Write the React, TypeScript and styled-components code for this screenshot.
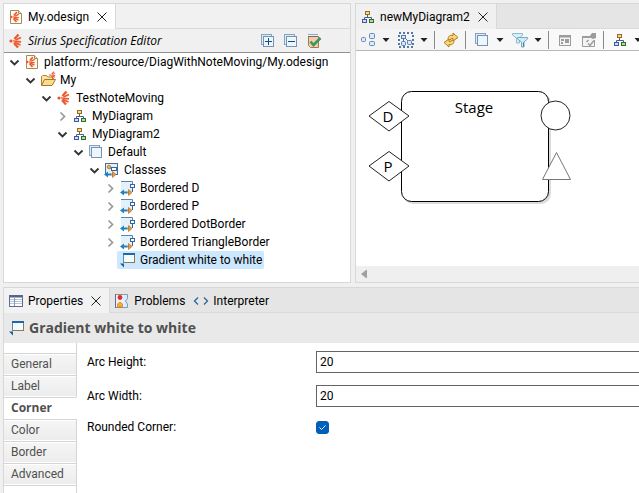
import React, { useState } from "react";
import styled, { createGlobalStyle, css } from "styled-components";

const humanist = `"Open Sans", "Noto Sans", sans-serif`;

const GlobalStyle = createGlobalStyle`
  *, *::before, *::after { box-sizing: border-box; }
  html, body, #root { height: 100%; }
  body {
    margin: 0;
    background: #f0f0f0;
    color: #000;
    font: 12px/18px Roboto, "Open Sans", sans-serif;
    overflow: hidden;
  }
  button, input { font: inherit; color: inherit; }
`;

/* ---------- icons ---------- */

const Svg = styled.svg`
  display: block;
  flex: none;
  overflow: visible;
`;

type IconProps = { children: React.ReactNode; width?: number; height?: number };
const Icon = ({ children, width = 16, height = 16 }: IconProps) => (
  <Svg width={width} height={height} viewBox={`0 0 ${width} ${height}`} fill="none" aria-hidden="true">
    {children}
  </Svg>
);

const FanShape = () => (
  <>
    <circle cx="3" cy="8" r="1.6" fill="#e8562f" />
    <g stroke="#ee5a30">
      <path d="M6.500 6 10.500 1.500" strokeWidth="2.400" />
      <path d="M7.500 7 13 4.500" strokeWidth="1.800" />
      <path d="M7 8.300 13 8.800" strokeWidth="1.800" />
      <path d="M6.500 9.300 12.500 12" strokeWidth="1.900" />
      <path d="M6 10 10 14.500" strokeWidth="2.400" />
    </g>
    <circle cx="6" cy="8" r="1.200" fill="#f58a68" />
  </>
);

const FanIcon = () => <Icon><FanShape /></Icon>;

const DesignFileIcon = () => (
  <Icon>
    <path d="M2.500 1.500h8l3 3v10h-11z" fill="#fdfcf3" stroke="#a58b55" />
    <path d="M10.500 1.500v3h3" fill="#f1dfab" stroke="#a58b55" />
    <g transform="translate(1 2) scale(.75)"><FanShape /></g>
  </Icon>
);

const FolderIcon = () => (
  <Icon>
    <path d="M1.500 13.500v-9l1-1h4l1 1.500h5v3" fill="#fbe6a8" stroke="#b5812f" />
    <path d="M1.500 13.500 4.500 7.500h11l-3.500 6z" fill="#fbdc8c" stroke="#a8752a" />
    <g transform="translate(8.500 -1) scale(.52)"><FanShape /></g>
  </Icon>
);

const DiagramIcon = () => (
  <Icon>
    <path d="M7.500 6v3M4.500 11V8.500h7V11" stroke="#4a5f82" />
    <rect x="5.500" y="2.500" width="4" height="3" fill="#f6d98c" stroke="#9a6d1e" />
    <rect x="2.500" y="10.500" width="4" height="3" fill="#cfe0fa" stroke="#3a5aa0" />
    <rect x="9.500" y="10.500" width="4" height="3" fill="#b4dc98" stroke="#2f6b2c" />
  </Icon>
);

const LayerIcon = ({ sign }: { sign?: "plus" | "minus" }) => (
  <Icon>
    <rect x="1.500" y="1.500" width="10" height="10" fill="#d8eef6" stroke="#8b9fbe" />
    <rect x="3.500" y="3.500" width="10" height="10" fill="#eaf8fd" stroke="#7a90b4" />
    {sign && <path d="M5 8.500h7" stroke="#174b82" />}
    {sign === "plus" && <path d="M8.500 5v7" stroke="#174b82" />}
  </Icon>
);

const ValidateIcon = () => (
  <Icon>
    <path d="M2.500 3.500h10v11h-8l-2-2z" fill="#fbc9a4" stroke="#a4794c" />
    <path d="M2.500 1.500h10M2.500 3.500h10" stroke="#3b5f92" strokeDasharray="1 1" />
    <path d="m4.500 8.500 3 3.500 7-7" stroke="#349a66" strokeWidth="2.600" />
  </Icon>
);

const ArrowsShape = () => (
  <>
    <path d="M3 12.500h4" stroke="#2480c0" strokeWidth="2" />
    <path d="m4 9.500-4 3 4 3z" fill="#1b84cc" />
    <path d="M7 12.500h3" stroke="#cf8632" strokeWidth="2" />
    <path d="m8.500 9.500 3.500 3-3.500 3z" fill="#e79c45" stroke="#9c6227" strokeWidth=".6" />
  </>
);

const ContainerIcon = () => (
  <Icon>
    <rect x="1.500" y="1.500" width="12" height="11" fill="#e2f1fa" stroke="#4a6d9a" />
    <circle cx="5" cy="5" r="1.800" fill="#eba94c" stroke="#a06a20" strokeWidth=".7" />
    <path d="M6.500 6.500 9 9" stroke="#a06a20" />
    <rect x="7.500" y="5.500" width="5" height="3" fill="#fff" stroke="#3b6296" />
    <ArrowsShape />
  </Icon>
);

const BorderedIcon = () => (
  <Icon>
    <path d="M1 1h11v11H1z" fill="#e2f1fa" />
    <path d="M1 1.500h11.500V5" stroke="#5d84ae" />
    <rect x="10.500" y="4.500" width="4" height="3" fill="#fff" stroke="#35649c" />
    <path d="M12.500 8v4" stroke="#35649c" />
    <ArrowsShape />
  </Icon>
);

const StyleIcon = () => (
  <Icon>
    <rect x="3.500" y="1.500" width="11" height="9" fill="#f2fbff" stroke="#8a7a4e" />
    <path d="M3 2h12" stroke="#2366a8" strokeWidth="2" />
    <path d="M3.500 3v7.500" stroke="#5c88b4" />
    <path d="M0 11.500h4v4z" fill="#1c5f96" />
  </Icon>
);

const ShapesIcon = () => (
  <Icon>
    <g fill="#dceafb" stroke="#6685b8">
      <rect x="1.500" y="5.500" width="4" height="4" rx="1" />
      <rect x="9.500" y="1.500" width="5" height="5" rx="1" />
      <rect x="9.500" y="9.500" width="5" height="4" rx="1" />
    </g>
  </Icon>
);

const SelectIcon = () => (
  <Icon>
    <rect x="1" y="1" width="14" height="14" stroke="#244f80" strokeWidth="1.500" strokeDasharray="2 2" />
    <path d="M5.500 6v5M6 5l5 5" stroke="#4f709f" />
    <g fill="#d6e7fb" stroke="#547cae">
      <rect x="3.500" y="3.500" width="4" height="3" />
      <rect x="3.500" y="9.500" width="4" height="4" rx="1" />
      <rect x="9.500" y="8.500" width="4" height="4" rx="1" />
    </g>
  </Icon>
);

const RefreshIcon = () => (
  <Icon>
    <g fill="#f7d778" stroke="#b37c1b" strokeLinejoin="round">
      <path d="M5 7.500C5 4.500 7 2.500 10 3.500V1l5 4.500-5 3.500V6.500C8.500 6 7.500 6.500 7.500 8z" />
      <path d="M11 8.500c0 3-2 5-5 4V15l-5-4.500L6 7v2.500c1.500.5 2.500 0 2.500-1.500z" />
    </g>
  </Icon>
);

const FilterIcon = () => (
  <Icon>
    <path d="M.5 1.500h10v1.500L7.500 6v5h-3V6l-4-3z" fill="#d2f1fb" stroke="#90b8cc" />
    <path d="M5.500 5.500h10v1.500L12 10v5H9.500v-5l-4-3z" fill="#c9eefb" stroke="#7ba6bd" />
    <path d="M11.500 10.500v4" stroke="#4f7894" />
  </Icon>
);

const WindowToolIcon = () => (
  <Icon>
    <rect x="2.500" y="3.500" width="11" height="10" fill="#f4f4f4" stroke="#9c9c9c" />
    <path d="M2 4.500h12M4 8h3M4 11h2" stroke="#9c9c9c" strokeWidth="2" />
    <path d="M8 7h4v4H8z" fill="#9c9c9c" />
  </Icon>
);

const PinToolIcon = () => (
  <Icon>
    <path d="M10 4.500H1.500v10h12V8" fill="#f4f4f4" stroke="#9c9c9c" />
    <path d="M1 5h8" stroke="#9c9c9c" strokeWidth="2" />
    <path d="M11 1h4v5l-3 1-4-2z" fill="#9c9c9c" />
    <path d="m7.500 8-2 2M7 11.500l2 2 4-5" stroke="#9c9c9c" strokeWidth="1.500" />
  </Icon>
);

const PropertiesIcon = () => (
  <Icon>
    <rect x="1.500" y="2.500" width="13" height="11" fill="#fff" stroke="#5f6d92" />
    <path d="M2 3.500h12" stroke="#52628c" strokeWidth="2" />
    <path d="M2 6.500h12M2 8.500h12M2 10.500h12" stroke="#b8c6dc" />
    <path d="M6.500 5v8" stroke="#8495b5" />
  </Icon>
);

const ProblemsIcon = () => (
  <Icon>
    <path d="M1.500 1.500h9v13h-9z" fill="#f4f0ec" stroke="#a08c78" />
    <path d="M9.500 1.500h4v4l-2 2.500 2 3v3.500h-4" fill="#dcecfa" stroke="#7b9cc0" />
    <path d="M1.500 1v14" stroke="#5470a0" />
    <circle cx="6" cy="4.500" r="2.400" fill="#da2d3b" />
    <path d="M3.500 14v-3L5 9.500h2L8.500 11v3z" fill="#f4ae36" stroke="#cf7b1c" strokeWidth=".7" />
  </Icon>
);

const CodeIcon = () => (
  <Icon>
    <path d="M5 4.500 1.500 8 5 11.500M11 4.500 14.500 8 11 11.500" stroke="#2b6795" strokeWidth="1.300" />
  </Icon>
);

const CloseIcon = () => (
  <Icon width={10} height={10}><path d="m.5.5 9 9m0-9-9 9" stroke="#222" /></Icon>
);

const CaretIcon = () => (
  <Icon width={8} height={8}><path d="M.5 2h7L4 6z" fill="#222" /></Icon>
);

const ChevronIcon = ({ open }: { open: boolean }) => (
  <Icon width={8} height={8}>
    {open ? (
      <path d="M.5 2.500 4.500 6.500l4-4" stroke="#333" strokeWidth="1.800" />
    ) : (
      <path d="M2.500.5 6.500 4.500l-4 4" stroke="#999" strokeWidth="1.700" />
    )}
  </Icon>
);

/* ---------- shared parts ---------- */

const Workbench = styled.main`
  display: grid;
  grid-template-columns: minmax(0, 348fr) minmax(0, 284fr);
  grid-template-rows: auto minmax(0, 1fr);
  gap: 4px;
  min-height: 100%;
  padding: 3px 0 0 3px;
`;

const Panel = styled.section<{ $wide?: boolean; $bleed?: boolean }>`
  display: flex;
  flex-direction: column;
  min-width: 0;
  background: #fff;
  border: 1px solid #d8d8d8;
  ${(p) => p.$bleed && css`border-right: 0;`}
  ${(p) => p.$wide && css`grid-column: 1 / -1; border-bottom: 0;`}
`;

const TabStrip = styled.div<{ $shade?: boolean }>`
  display: flex;
  height: 25px;
  flex: none;
  background: ${(p) => (p.$shade ? "#e5e5e5" : "#f1f1f1")};
  box-shadow: inset 0 -1px #dadada;
`;

const Tab = styled.div<{ $tone?: string }>`
  display: flex;
  align-items: center;
  gap: 8px;
  padding: 0 8px 0 4px;
  background: ${(p) => p.$tone ?? "transparent"};
  ${(p) => p.$tone && css`border-right: 1px solid #d8d8d8;`}
`;

const TabButton = styled.button`
  display: flex;
  align-items: center;
  gap: 4px;
  padding: 0;
  border: 0;
  background: none;
  white-space: nowrap;
`;

const IconButton = styled.button`
  display: flex;
  align-items: center;
  gap: 6px;
  padding: 0;
  border: 0;
  background: none;
`;

/* ---------- specification editor ---------- */

const EditorHeader = styled.header`
  display: flex;
  align-items: center;
  gap: 4px;
  height: 24px;
  padding: 0 28px 0 4px;
  background: #f0f0f0;
  border-bottom: 1px solid #929292;
`;

const EditorTitle = styled.h1`
  flex: 1;
  margin: 0;
  font: italic 400 12px/18px ${humanist};
  white-space: nowrap;
`;

const HeaderActions = styled.div`
  display: flex;
  gap: 7px;
`;

const Tree = styled.ul`
  list-style: none;
  margin: 0;
  padding: 0 0 13px;
`;

const TreeRow = styled.li<{ $level: number }>`
  display: flex;
  align-items: center;
  gap: 3px;
  height: 18px;
  padding-left: ${(p) => 6 + p.$level * 16}px;
`;

const Toggle = styled.button`
  width: 8px;
  padding: 0;
  border: 0;
  background: none;
`;

const Node = styled.button<{ $selected: boolean }>`
  display: flex;
  align-items: center;
  gap: 4px;
  height: 18px;
  padding: 0 2px 0 3px;
  border: 0;
  border-radius: 2px;
  background: ${(p) => (p.$selected ? "#cce8ff" : "transparent")};
  white-space: nowrap;
`;

type Item = { level: number; label: string; icon: React.ReactNode; open?: boolean };

const items: Item[] = [
  { level: 0, label: "platform:/resource/DiagWithNoteMoving/My.odesign", icon: <DesignFileIcon />, open: true },
  { level: 1, label: "My", icon: <FolderIcon />, open: true },
  { level: 2, label: "TestNoteMoving", icon: <FanIcon />, open: true },
  { level: 3, label: "MyDiagram", icon: <DiagramIcon />, open: false },
  { level: 3, label: "MyDiagram2", icon: <DiagramIcon />, open: true },
  { level: 4, label: "Default", icon: <LayerIcon />, open: true },
  { level: 5, label: "Classes", icon: <ContainerIcon />, open: true },
  { level: 6, label: "Bordered D", icon: <BorderedIcon />, open: false },
  { level: 6, label: "Bordered P", icon: <BorderedIcon />, open: false },
  { level: 6, label: "Bordered DotBorder", icon: <BorderedIcon />, open: false },
  { level: 6, label: "Bordered TriangleBorder", icon: <BorderedIcon />, open: false },
  { level: 6, label: "Gradient white to white", icon: <StyleIcon /> },
];

function SpecificationEditor() {
  const [selected, setSelected] = useState("Gradient white to white");
  return (
    <Panel>
      <TabStrip>
        <Tab $tone="#ffffff">
          <TabButton><DesignFileIcon />My.odesign</TabButton>
          <IconButton aria-label="Close My.odesign"><CloseIcon /></IconButton>
        </Tab>
      </TabStrip>
      <EditorHeader>
        <FanIcon />
        <EditorTitle>Sirius Specification Editor</EditorTitle>
        <HeaderActions>
          <IconButton aria-label="Expand all"><LayerIcon sign="plus" /></IconButton>
          <IconButton aria-label="Collapse all"><LayerIcon sign="minus" /></IconButton>
          <IconButton aria-label="Validate"><ValidateIcon /></IconButton>
        </HeaderActions>
      </EditorHeader>
      <Tree>
        {items.map((item) => (
          <TreeRow key={item.label} $level={item.level}>
            <Toggle aria-label={`Toggle ${item.label}`} disabled={item.open === undefined}>
              {item.open !== undefined && <ChevronIcon open={item.open} />}
            </Toggle>
            <Node $selected={item.label === selected} onClick={() => setSelected(item.label)}>
              {item.icon}
              {item.label}
            </Node>
          </TreeRow>
        ))}
      </Tree>
    </Panel>
  );
}

/* ---------- diagram editor ---------- */

const Toolbar = styled.div`
  display: flex;
  align-items: center;
  height: 22px;
  padding-left: 4px;
  overflow: hidden;
  background: linear-gradient(90deg, #f3f3f3, #fbfbfb);
  border-bottom: 1px solid #b8b8b8;
`;

const ToolGroup = styled.div`
  display: flex;
  align-items: center;
  gap: 8px;
  height: 18px;
  flex: none;
  padding-right: 6px;
  margin-right: 8px;
  border-right: 1px solid #8a8a8a;
`;

const Canvas = styled.div`
  flex: 1;
  min-height: 0;
  overflow: hidden;
`;

const CanvasLabel = styled.text`
  font-family: ${humanist};
  font-size: 15px;
  fill: #000;
  text-anchor: middle;
`;

const ScrollTrack = styled.div`
  display: flex;
  align-items: center;
  height: 16px;
  padding-left: 5px;
  background: #efefef;
`;

type ToolProps = { label: string; icon: React.ReactNode; menu?: boolean };
const Tool = ({ label, icon, menu }: ToolProps) => (
  <IconButton aria-label={label}>
    {icon}
    {menu && <CaretIcon />}
  </IconButton>
);

function DiagramEditor() {
  return (
    <Panel $bleed>
      <TabStrip $shade>
        <Tab $tone="#f0f0f0">
          <TabButton><DiagramIcon />newMyDiagram2</TabButton>
          <IconButton aria-label="Close newMyDiagram2"><CloseIcon /></IconButton>
        </Tab>
      </TabStrip>
      <Toolbar>
        <ToolGroup>
          <Tool label="Arrange" icon={<ShapesIcon />} menu />
          <Tool label="Select" icon={<SelectIcon />} menu />
        </ToolGroup>
        <ToolGroup>
          <Tool label="Refresh" icon={<RefreshIcon />} />
        </ToolGroup>
        <ToolGroup>
          <Tool label="Layers" icon={<LayerIcon />} menu />
          <Tool label="Filters" icon={<FilterIcon />} menu />
        </ToolGroup>
        <ToolGroup>
          <Tool label="Hide element" icon={<WindowToolIcon />} />
          <Tool label="Pin element" icon={<PinToolIcon />} />
        </ToolGroup>
        <ToolGroup>
          <Tool label="Diagram" icon={<DiagramIcon />} menu />
        </ToolGroup>
      </Toolbar>
      <Canvas>
        <Svg width="283" height="180" viewBox="0 0 283 180" fill="none" role="img" aria-label="Stage diagram">
          <rect x="47" y="42" width="148" height="111" rx="10" fill="#dcdcdc" />
          <rect x="45.500" y="40.500" width="147" height="110" rx="10" fill="#fff" stroke="#000" />
          <CanvasLabel x="118" y="62">Stage</CanvasLabel>
          <g fill="#fff" stroke="#222">
            <path d="m33 50.500 20 14.500-20 15-20-15z" />
            <path d="m33 100.500 20 14.500-20 15-20-15z" />
            <circle cx="199.500" cy="64.500" r="14.500" />
            <path d="m200.500 101.500 14 27h-28z" stroke="#777" />
          </g>
          <CanvasLabel x="32" y="71">D</CanvasLabel>
          <CanvasLabel x="32" y="121">P</CanvasLabel>
        </Svg>
      </Canvas>
      <ScrollTrack>
        <IconButton aria-label="Scroll left">
          <Icon width={6} height={8}><path d="M6 0v8H5L0 4l5-4z" fill="#a0a0a0" /></Icon>
        </IconButton>
      </ScrollTrack>
    </Panel>
  );
}

/* ---------- properties view ---------- */

const PropertiesTitle = styled.header`
  display: flex;
  align-items: center;
  gap: 4px;
  height: 30px;
  padding-left: 5px;
  background: #e9e9e9;
`;

const Heading = styled.h2`
  margin: 0;
  color: #505050;
  font: 700 14px/18px ${humanist};
`;

const PropertiesBody = styled.div`
  display: grid;
  grid-template-columns: 73px minmax(0, 1fr);
  flex: 1;
`;

const SideTabs = styled.nav`
  display: flex;
  flex-direction: column;

  &::before, &::after {
    content: "";
    border-right: 1px solid #d5d5d5;
  }
  &::before { height: 10px; }
  &::after { flex: 1; border-top: 1px solid #d5d5d5; }
`;

const SideTab = styled.button<{ $active: boolean }>`
  height: 22px;
  padding: 0 7px 2px;
  border: solid #d5d5d5;
  border-width: 1px 1px 0 0;
  background: linear-gradient(#f6f6f6, #ececec);
  box-shadow: inset 0 1px #fff, inset 0 -1px #fff;
  color: #505050;
  text-align: left;
  ${(p) =>
    p.$active &&
    css`
      background: #fff;
      border-right-color: #fff;
      font-family: ${humanist};
      font-weight: 700;
    `}
`;

const Form = styled.form`
  display: grid;
  grid-template-columns: 229px minmax(0, 1fr);
  grid-template-rows: 22px 22px 16px;
  row-gap: 12px;
  align-content: start;
  align-items: center;
  padding: 8px 0 0 10px;
`;

const TextField = styled.input`
  width: 100%;
  height: 22px;
  padding: 0 3px;
  border: 1px solid #646464;
  border-right: 0;
  background: #fff;
`;

const CheckField = styled.input`
  appearance: none;
  width: 13px;
  height: 13px;
  margin: 0;
  border: 1px solid #005fb8;
  border-radius: 3px;
  background: #fff;

  &:checked {
    background: #005fb8
      url("data:image/svg+xml,%3Csvg xmlns='http://www.w3.org/2000/svg' viewBox='0 0 11 11' fill='none' stroke='white'%3E%3Cpath d='m2.500 5.500 2 2 4-4'/%3E%3C/svg%3E");
  }
`;

const sideTabs = ["General", "Label", "Corner", "Color", "Border", "Advanced"];

function PropertiesView() {
  const [active, setActive] = useState("Corner");
  return (
    <Panel $wide $bleed>
      <TabStrip $shade>
        <Tab $tone="#f2f2f2">
          <TabButton><PropertiesIcon />Properties</TabButton>
          <IconButton aria-label="Close Properties"><CloseIcon /></IconButton>
        </Tab>
        <Tab>
          <TabButton><ProblemsIcon />Problems</TabButton>
        </Tab>
        <TabButton><CodeIcon />Interpreter</TabButton>
      </TabStrip>
      <PropertiesTitle>
        <StyleIcon />
        <Heading>Gradient white to white</Heading>
      </PropertiesTitle>
      <PropertiesBody>
        <SideTabs>
          {sideTabs.map((name) => (
            <SideTab key={name} type="button" $active={name === active} onClick={() => setActive(name)}>
              {name}
            </SideTab>
          ))}
        </SideTabs>
        <Form>
          <label htmlFor="arc-height">Arc Height:</label>
          <TextField id="arc-height" type="text" defaultValue="20" />
          <label htmlFor="arc-width">Arc Width:</label>
          <TextField id="arc-width" type="text" defaultValue="20" />
          <label htmlFor="rounded-corner">Rounded Corner:</label>
          <CheckField id="rounded-corner" type="checkbox" defaultChecked />
        </Form>
      </PropertiesBody>
    </Panel>
  );
}

export default function App() {
  return (
    <>
      <GlobalStyle />
      <Workbench>
        <SpecificationEditor />
        <DiagramEditor />
        <PropertiesView />
      </Workbench>
    </>
  );
}
